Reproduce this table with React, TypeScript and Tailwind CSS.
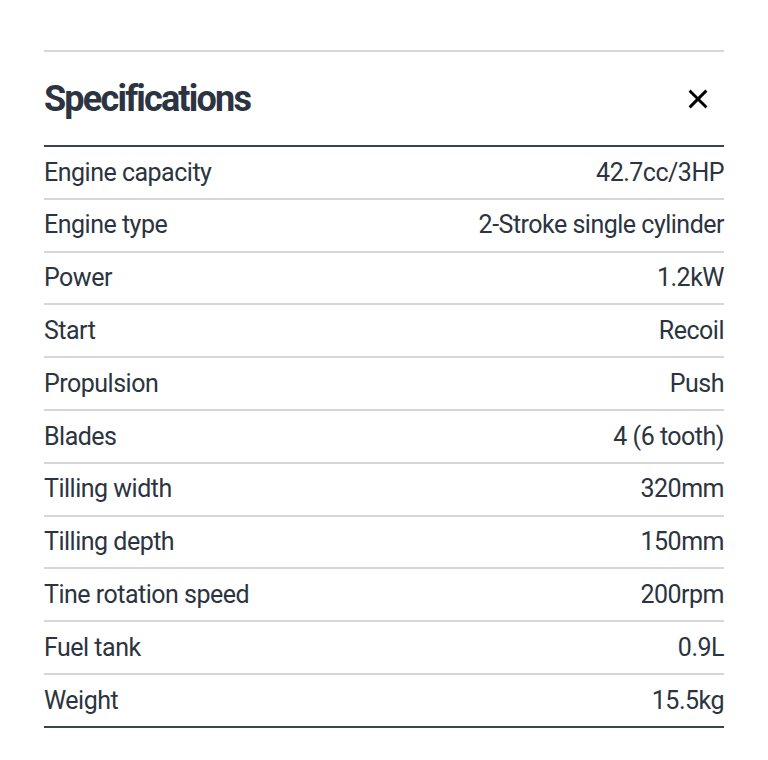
import React from 'react';

const specs: [string, string][] = [
  ['Engine capacity', '42.7cc/3HP'],
  ['Engine type', '2-Stroke single cylinder'],
  ['Power', '1.2kW'],
  ['Start', 'Recoil'],
  ['Propulsion', 'Push'],
  ['Blades', '4 (6 tooth)'],
  ['Tilling width', '320mm'],
  ['Tilling depth', '150mm'],
  ['Tine rotation speed', '200rpm'],
  ['Fuel tank', '0.9L'],
  ['Weight', '15.5kg'],
];

export default function App() {
  return (
    <div className="min-h-[760px] w-[768px] bg-white pt-[50px] px-[44px] text-[#2b3440] font-['Roboto',sans-serif]">
      <div className="border-t-2 border-[#d6d6d6]" />
      {/* Header */}
      <div className="flex items-center justify-between h-[93px]">
        <h2 className="text-[36px] font-bold tracking-[-1.8px] leading-none">Specifications</h2>
        <button className="mr-[15px] text-black" aria-label="Close">
          <svg className="w-[22px] h-[22px]" viewBox="0 0 24 24" fill="none" stroke="currentColor" strokeWidth={3.2} strokeLinecap="square">
            <path d="M4 4l16 16M20 4L4 20" />
          </svg>
        </button>
      </div>

      {/* Spec table */}
      <div className="border-t-2 border-[#3a4350]">
        {specs.map(([label, value], i) => (
          <div
            key={label}
            className={`flex items-center justify-between h-[52.8px] text-[25px] tracking-[-0.5px] ${
              i === specs.length - 1 ? 'border-b-2 border-[#3a4350]' : 'border-b-2 border-[#d6d6d6]'
            }`}
          >
            <span>{label}</span>
            <span>{value}</span>
          </div>
        ))}
      </div>
    </div>
  );
}
